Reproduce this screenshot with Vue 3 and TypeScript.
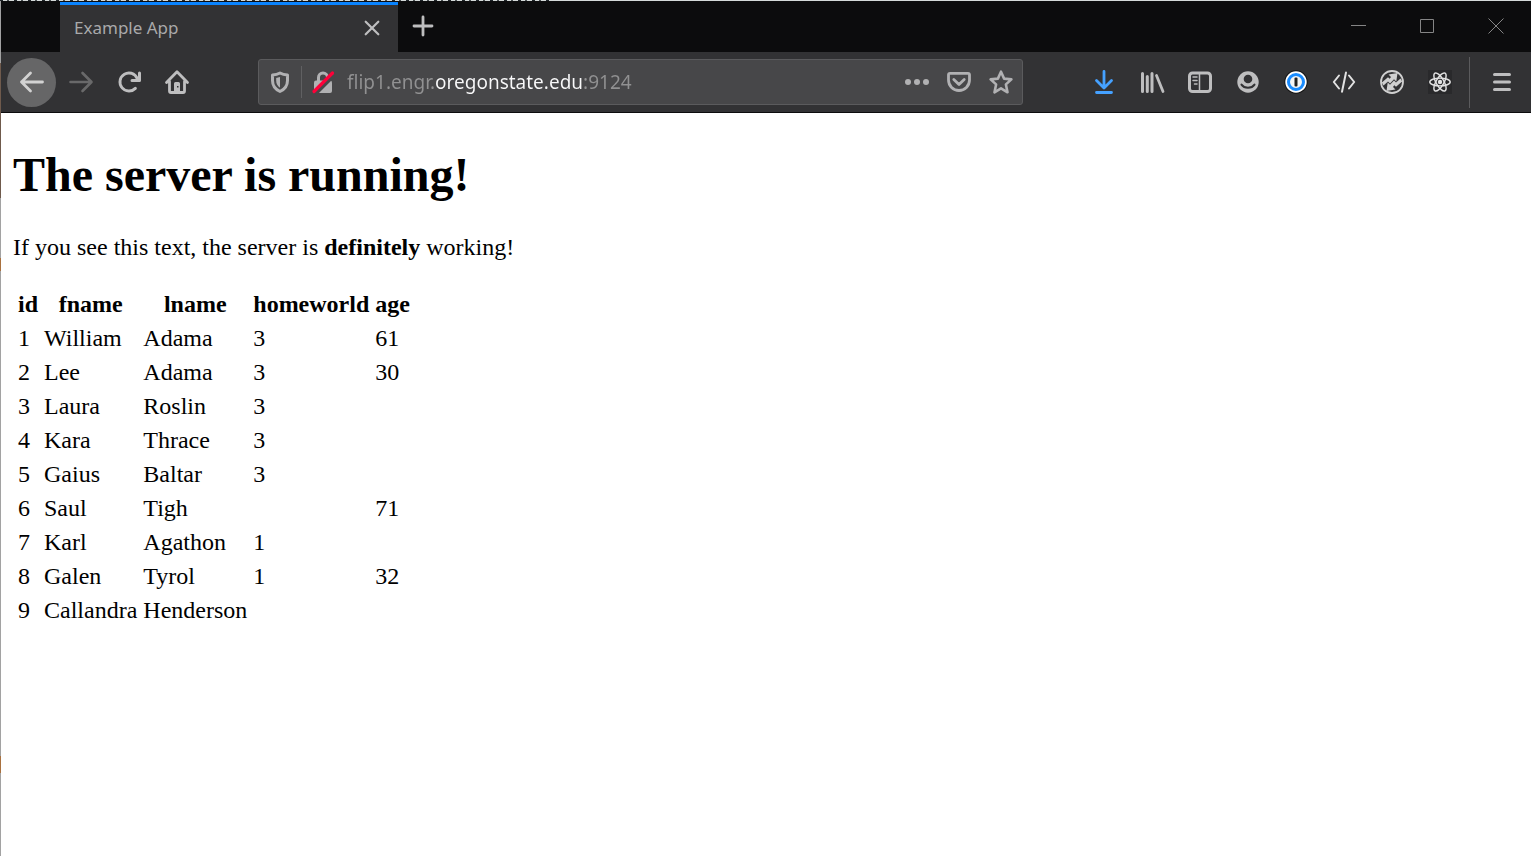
<script setup lang="ts">
import { ref } from 'vue'

interface Person {
  id: number
  fname: string
  lname: string
  homeworld?: number
  age?: number
}

const address = ref('flip1.engr.oregonstate.edu:9124')

const people: Person[] = [
  { id: 1, fname: 'William', lname: 'Adama', homeworld: 3, age: 61 },
  { id: 2, fname: 'Lee', lname: 'Adama', homeworld: 3, age: 30 },
  { id: 3, fname: 'Laura', lname: 'Roslin', homeworld: 3 },
  { id: 4, fname: 'Kara', lname: 'Thrace', homeworld: 3 },
  { id: 5, fname: 'Gaius', lname: 'Baltar', homeworld: 3 },
  { id: 6, fname: 'Saul', lname: 'Tigh', age: 71 },
  { id: 7, fname: 'Karl', lname: 'Agathon', homeworld: 1 },
  { id: 8, fname: 'Galen', lname: 'Tyrol', homeworld: 1, age: 32 },
  { id: 9, fname: 'Callandra', lname: 'Henderson' },
]
</script>

<template>
  <div class="window">
    <header class="tabbar">
      <div class="tab">
        <span class="tab-title">Example App</span>
        <button class="tab-close" type="button" aria-label="Close tab">
          <svg viewBox="0 0 24 24"><path d="M5.7 5.7l12.6 12.6M18.3 5.7L5.7 18.3" class="line" stroke-width="2.2" /></svg>
        </button>
      </div>
      <button class="new-tab" type="button" aria-label="New tab">
        <svg viewBox="0 0 24 24"><path d="M12 3v18M3 12h18" class="line" stroke-width="2.8" /></svg>
      </button>
      <div class="controls">
        <button type="button" aria-label="Minimize">
          <svg viewBox="0 0 24 24"><path d="M5 11.500h15" /></svg>
        </button>
        <button type="button" aria-label="Maximize">
          <svg viewBox="0 0 24 24"><path d="M5.500 5.500h13v13h-13z" /></svg>
        </button>
        <button type="button" aria-label="Close window">
          <svg viewBox="0 0 24 24"><path d="M4.500 4.500l15 15M19.500 4.500l-15 15" /></svg>
        </button>
      </div>
    </header>

    <nav class="toolbar" aria-label="Navigation">
      <button class="tool back" type="button" aria-label="Back">
        <svg viewBox="0 0 24 24"><path d="M10.500 3L1.500 12l9 9M1.500 12H22.500" class="line" stroke-width="2.800" /></svg>
      </button>
      <button class="tool forward" type="button" aria-label="Forward" disabled>
        <svg viewBox="0 0 24 24"><path d="M13.500 3l9 9-9 9M22 12H1.500" class="line" stroke-width="2.6" /></svg>
      </button>
      <button class="tool" type="button" aria-label="Reload">
        <svg viewBox="0 0 16 16"><path class="fill" d="M15 1a1 1 0 0 0-1 1v2.418A6.995 6.995 0 1 0 8 15a6.954 6.954 0 0 0 4.950-2.050 1 1 0 0 0-1.414-1.414A5.019 5.019 0 1 1 12.549 6H10a1 1 0 0 0 0 2h5a1 1 0 0 0 1-1V2a1 1 0 0 0-1-1z" /></svg>
      </button>
      <button class="tool" type="button" aria-label="Home">
        <svg viewBox="0 0 24 24">
          <path class="line" stroke-width="2.8" d="M1.500 12.500L12 1.700l10.500 10.800M4.500 11.500v9.500a1.500 1.500 0 0 0 1.500 1.500h12a1.500 1.500 0 0 0 1.500-1.500v-9.500" />
          <path class="fill" fill-rule="evenodd" d="M9 23V13.500a1.500 1.500 0 0 1 1.500-1.500h3a1.500 1.500 0 0 1 1.500 1.500V23zM12 16v1.500h1.500v-1.500z" />
        </svg>
      </button>

      <div class="urlbar">
        <button class="shield" type="button" aria-label="Tracking protection">
          <svg viewBox="0 0 24 24">
            <path class="line" stroke-width="3" d="M12 3C9.500 4.300 7 4.800 4.500 5v5.500c0 5 2.800 8.800 7.500 11 4.700-2.200 7.500-6 7.500-11V5C17 4.800 14.500 4.300 12 3z" />
            <path class="fill" d="M12 7v10.800C9.300 16 8.200 13.500 8.200 10.500V8z" />
          </svg>
        </button>
        <button class="lock" type="button" aria-label="Connection is not secure">
          <svg viewBox="0 0 24 24">
            <path class="line" stroke-width="3" d="M7.500 11V7.500a4.500 4.500 0 0 1 9 0V11" />
            <rect class="fill" x="3" y="10.500" width="18" height="12.500" rx="2" />
            <path d="M4 24L23 5" stroke="#474749" stroke-width="4" />
            <path d="M3 21.500L21.500 3" stroke="#ff0039" stroke-width="3.200" stroke-linecap="round" />
          </svg>
        </button>
        <input v-model="address" class="address" type="text" aria-label="Address" spellcheck="false" />
        <button class="action" type="button" aria-label="Page actions">
          <svg viewBox="0 0 24 24"><g class="fill"><circle cx="3" cy="12" r="3" /><circle cx="12" cy="12" r="3" /><circle cx="21" cy="12" r="3" /></g></svg>
        </button>
        <button class="action" type="button" aria-label="Save to Pocket">
          <svg viewBox="0 0 24 24"><path class="line" stroke-width="2.8" d="M3 3.300h18a1.500 1.500 0 0 1 1.500 1.500V10a10.500 10.500 0 0 1-21 0V4.800A1.500 1.500 0 0 1 3 3.300zM6.800 9.500L12 14.500l5.200-5" /></svg>
        </button>
        <button class="action" type="button" aria-label="Bookmark this page">
          <svg viewBox="0 0 24 24"><path class="line" stroke-width="2.600" d="M12 1.700l3.100 6.900 7.300.8-5.500 5 1.600 7.900L12 18.400l-6.500 3.900 1.600-7.900-5.500-5 7.300-.8z" /></svg>
        </button>
      </div>

      <button class="tool download" type="button" aria-label="Downloads">
        <svg viewBox="0 0 24 24"><path class="line" stroke-width="2.800" d="M12 1.500v16.500M4.500 10.500L12 18l7.500-7.500M4.500 22.500h15" /></svg>
      </button>
      <button class="tool" type="button" aria-label="Library">
        <svg viewBox="0 0 24 24"><path class="line" stroke-width="3" d="M2.500 3.500v18M7.300 6.500v15M12 3.500v18" /><path class="line" stroke-width="2.800" d="M16.500 5.500l6.500 16" /></svg>
      </button>
      <button class="tool" type="button" aria-label="Sidebars">
        <svg viewBox="0 0 24 24"><rect class="line" stroke-width="3" x="1.500" y="3" width="21" height="18.500" rx="3" /><path class="line" stroke-width="1.500" d="M11.500 3v18M5 7h4M5 10.500h4M6.500 14H9" /></svg>
      </button>
      <button class="tool" type="button" aria-label="Account">
        <svg viewBox="0 0 24 24"><circle class="fill" cx="12" cy="12" r="10.700" /><circle class="cut" cx="12" cy="9" r="4.300" /><path d="M5.500 14.600c2.800 4.200 10.200 4.200 13 0" fill="none" stroke="#323234" stroke-width="2" stroke-linecap="round" /></svg>
      </button>
      <button class="tool" type="button" aria-label="1Password">
        <svg viewBox="0 0 24 24"><circle cx="12" cy="12" r="11.700" fill="#151515" /><circle cx="12" cy="12" r="10.700" fill="#fff" /><circle cx="12" cy="12" r="7.500" fill="#f5f5f5" stroke="#1a8cff" stroke-width="3" /><rect x="10.500" y="7.500" width="3" height="9" rx="1" fill="#222" /></svg>
      </button>
      <button class="tool" type="button" aria-label="Developer">
        <svg viewBox="0 0 24 24"><path class="line bright" stroke-width="2" d="M7 5.500L1.800 12 7 18.500M17 5.500l5.200 6.500-5.200 6.500M14 2.500L10 21.800" /></svg>
      </button>
      <button class="tool" type="button" aria-label="Request routing">
        <svg viewBox="0 0 24 24">
          <circle class="line routing" cx="12" cy="12" r="11" stroke-width="1.800" />
          <path class="routing-fill" d="M8.500 4.500L17.500 3l-1.200 8.500-2.300-2.300-4 4.300-2-2-4.500 4-1.700-3 6.200-5.300 1.700 1.600 1.300-1.800z" />
          <path class="routing-fill" transform="rotate(180 12 12)" d="M8.500 4.500L17.500 3l-1.200 8.500-2.300-2.300-4 4.300-2-2-4.500 4-1.700-3 6.200-5.300 1.700 1.600 1.300-1.800z" />
        </svg>
      </button>
      <button class="tool" type="button" aria-label="React Developer Tools">
        <svg viewBox="0 0 24 24">
          <rect width="24" height="24" fill="#29292b" />
          <circle cx="12" cy="12" r="2.200" class="bright-fill" />
          <g class="line bright" stroke-width="1.400"><ellipse cx="12" cy="12" rx="10.200" ry="3.900" /><ellipse cx="12" cy="12" rx="10.200" ry="3.900" transform="rotate(60 12 12)" /><ellipse cx="12" cy="12" rx="10.200" ry="3.900" transform="rotate(120 12 12)" /></g>
        </svg>
      </button>
      <div class="divider"></div>
      <button class="tool" type="button" aria-label="Open menu">
        <svg viewBox="0 0 24 24"><path class="line" stroke-width="3" d="M4.500 4.500h15M4.500 12h15M4.500 19.500h15" /></svg>
      </button>
    </nav>

    <main class="page">
      <h1>The server is running!</h1>
      <p>If you see this text, the server is <strong>definitely</strong> working!</p>
      <table>
        <thead>
          <tr>
            <th scope="col">id</th>
            <th scope="col">fname</th>
            <th scope="col">lname</th>
            <th scope="col">homeworld</th>
            <th scope="col">age</th>
          </tr>
        </thead>
        <tbody>
          <tr v-for="person in people" :key="person.id">
            <td>{{ person.id }}</td>
            <td>{{ person.fname }}</td>
            <td>{{ person.lname }}</td>
            <td>{{ person.homeworld }}</td>
            <td>{{ person.age }}</td>
          </tr>
        </tbody>
      </table>
    </main>
  </div>
</template>

<style>
body {
  margin: 0;
  background: #fff;
}
</style>

<style scoped>
/* The one-pixel top and left edges show slivers of the window behind. */
.window {
  box-sizing: border-box;
  min-height: 100vh;
  padding: 1px 0 0 1px;
  background:
    repeating-linear-gradient(90deg, #20262a 0 3px, #d5dad9 3px 7px, #4a5052 7px 9px, #d5dad9 9px 14px) 0 0 / 552px 1px no-repeat,
    linear-gradient(#d5dad9, #d5dad9) 0 0 / 100% 1px no-repeat,
    linear-gradient(#a2a2a2 63px, #6f5a4c 63px 198px, #a2a2a2 198px 258px, #a9713f 258px 271px, #a2a2a2 271px 756px, #a9713f 756px 773px, #a2a2a2 773px) 0 0 / 1px 100% no-repeat,
    #fff;
  font-family: "Noto Sans", "Open Sans", sans-serif;
}

button {
  display: flex;
  align-items: center;
  justify-content: center;
  flex: none;
  margin: 0;
  padding: 0;
  border: 0;
  background: none;
  color: #bebebf;
}

svg {
  display: block;
  width: 24px;
  height: 24px;
  overflow: visible;
}

.line {
  fill: none;
  stroke: currentColor;
  stroke-linecap: round;
  stroke-linejoin: round;
}

.fill {
  fill: currentColor;
}

.cut {
  fill: #323234;
}

.bright {
  stroke: #e2e2e2;
}

.bright-fill {
  fill: #e2e2e2;
}

.routing {
  stroke: #d0d0d0;
}

.routing-fill {
  fill: #d0d0d0;
}

.tabbar {
  box-sizing: border-box;
  display: flex;
  height: 51px;
  padding-top: 1px;
  padding-left: 59px;
  background: #0c0c0d;
}

.tab {
  box-sizing: border-box;
  display: flex;
  align-items: center;
  justify-content: space-between;
  width: 338px;
  padding: 0 14px 2px;
  border-top: 3px solid #0a84ff;
  background: #323234;
}

.tab-title {
  color: #a9a9aa;
  font-size: 17px;
  line-height: 24px;
}

.tab-close {
  width: 24px;
  height: 24px;
}

.new-tab {
  width: 50px;
  padding-bottom: 2px;
}

.controls {
  display: flex;
  margin-right: 1px;
  margin-left: auto;
  padding-bottom: 2px;
}

.controls button {
  width: 69px;
}

.controls path {
  fill: none;
  stroke: #858585;
  stroke-width: 1;
}

.toolbar {
  display: flex;
  align-items: center;
  height: 60px;
  padding: 0 5px 0 6px;
  border-bottom: 1px solid #0c0c0d;
  background: #323234;
}

.tool {
  width: 48px;
  height: 48px;
}

.back {
  width: 49px;
  height: 49px;
  margin-right: 1px;
  border-radius: 50%;
  background: #666667;
  color: #d2d2d2;
}

.forward {
  color: #69696a;
}

.download {
  color: #45a1ff;
}

.urlbar {
  box-sizing: border-box;
  display: flex;
  align-items: center;
  flex: 1;
  min-width: 0;
  height: 46px;
  margin: 0 57px;
  border: 1px solid #5b5b5d;
  border-radius: 3px;
  background: #474749;
  color: #b1b1b3;
}

.urlbar button {
  color: #b1b1b3;
}

.shield {
  width: 43px;
  height: 32px;
  border-right: 1px solid #606062;
}

.lock {
  width: 42px;
  height: 32px;
}

/* Only the registrable domain is bright; subdomain and port stay grey. */
.address {
  flex: 1;
  min-width: 0;
  height: 36px;
  margin: 0 0 0 3px;
  padding: 0;
  border: 0;
  outline: 0;
  background: linear-gradient(90deg, #919192 88px, #f9f9fa 88px 235px, #919192 235px);
  background-clip: text;
  -webkit-background-clip: text;
  color: transparent;
  font-family: inherit;
  font-size: 19px;
}

.action {
  width: 42px;
  height: 42px;
}

.divider {
  width: 1px;
  height: 51px;
  margin: 0 8px 0 5px;
  background: #5b5b5d;
}

.page {
  padding: 34px 12px 24px;
  color: #000;
  font-family: "Liberation Serif", "Times New Roman", serif;
  font-size: 24px;
  line-height: 28px;
  background: #fff;
}

h1 {
  margin: 0 0 30px;
  font-size: 48px;
  line-height: 56px;
}

p {
  margin: 0 0 24px;
}

table {
  border-collapse: separate;
  border-spacing: 4px;
}

th,
td {
  padding: 1px;
}

td {
  text-align: left;
}
</style>
